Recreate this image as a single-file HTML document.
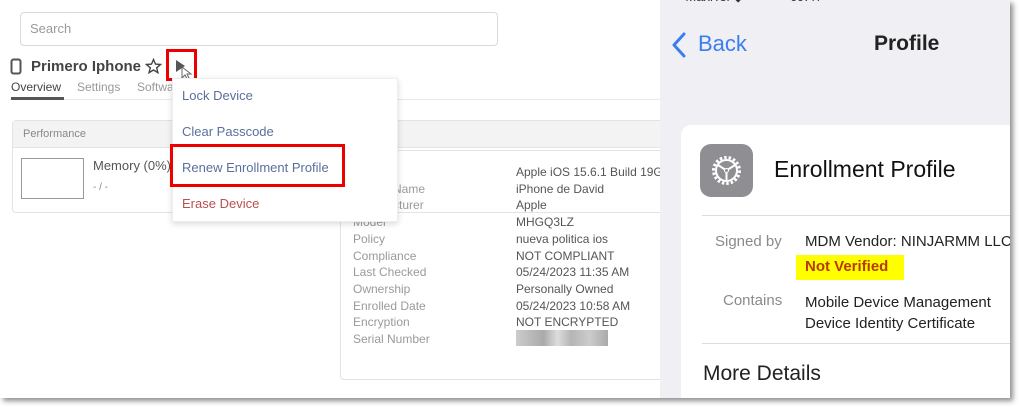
<!DOCTYPE html>
<html><head><style>
*{margin:0;padding:0;box-sizing:border-box}
body{width:1019px;height:407px;background:#fff;font-family:"Liberation Sans",sans-serif;position:relative;overflow:hidden}
.a{position:absolute;white-space:nowrap}
#frame{position:absolute;left:0;top:0;width:1010px;height:398px;overflow:hidden;box-shadow:3px 3px 5px rgba(0,0,0,.45);background:#fff}
.lbl{color:#9a9a9a;font-size:12px}
.val{color:#555;font-size:12px}
.mi{font-size:13px;color:#5b6f9c}
</style></head><body>
<div id="frame">
<div class="a" style="left:20px;top:12px;width:478px;height:34px;border:1px solid #d9d9d9;border-radius:4px"></div>
<div class="a" style="left:30px;top:21px;font-size:13px;color:#999">Search</div>
<svg class="a" style="left:10px;top:58px" width="12" height="17"><rect x="1.5" y="1.5" width="9" height="14" rx="2" fill="none" stroke="#555" stroke-width="2"/></svg>
<div class="a" style="left:31px;top:58px;font-size:15px;font-weight:bold;color:#444">Primero Iphone</div>
<svg class="a" style="left:145px;top:58px" width="17" height="16"><path d="M8.5 1.5l2 4.6 5 .4-3.8 3.3 1.2 4.9-4.4-2.7-4.4 2.7 1.2-4.9L1.5 6.5l5-.4z" fill="none" stroke="#444" stroke-width="1.4"/></svg>
<div class="a" style="left:166px;top:49px;width:31px;height:32px;border:3px solid #e00"></div>
<svg class="a" style="left:175px;top:58px" width="20" height="22"><path d="M1 2l9 6-9 6z" fill="#555"/><path d="M7 9l0 11 3-3 2 4 2-1-2-4 4 0z" fill="#fff" stroke="#666" stroke-width="1"/></svg>
<div class="a" style="left:11px;top:80px;font-size:12px;color:#444">Overview</div>
<div class="a" style="left:77px;top:80px;font-size:12px;color:#999">Settings</div>
<div class="a" style="left:137px;top:80px;font-size:12px;color:#999">Software</div>
<div class="a" style="left:10px;top:99px;width:650px;height:1px;background:#e8e8e8"></div>
<div class="a" style="left:11px;top:97px;width:53px;height:3px;background:#555"></div>
<div class="a" style="left:12px;top:120px;width:660px;height:93px;border:1px solid #e3e3e3;border-radius:4px"></div>
<div class="a" style="left:13px;top:121px;width:660px;height:27px;background:#f3f3f3;border-bottom:1px solid #e3e3e3"></div>
<div class="a" style="left:23px;top:128px;font-size:11px;color:#888">Performance</div>
<div class="a" style="left:21px;top:158px;width:63px;height:41px;border:1px solid #999"></div>
<div class="a" style="left:93px;top:158px;font-size:13px;color:#555">Memory (0%)</div>
<div class="a" style="left:93px;top:182px;font-size:10px;color:#888">- / -</div>
<div class="a" style="left:340px;top:150px;width:330px;height:230px;border:1px solid #e3e3e3;border-radius:4px"></div>
<div class="a lbl" style="left:353px;top:164px;line-height:16.7px">OS<br>Device Name<br>Manufacturer<br>Model<br>Policy<br>Compliance<br>Last Checked<br>Ownership<br>Enrolled Date<br>Encryption<br>Serial Number</div>
<div class="a val" style="left:516px;top:164px;line-height:16.7px">Apple iOS 15.6.1 Build 19G82<br>iPhone de David<br>Apple<br>MHGQ3LZ<br>nueva politica ios<br>NOT COMPLIANT<br>05/24/2023 11:35 AM<br>Personally Owned<br>05/24/2023 10:58 AM<br>NOT ENCRYPTED</div>
<div class="a" style="left:516px;top:330px;width:92px;height:16px;background:linear-gradient(90deg,#ccc,#aaa 30%,#ddd 45%,#b5b5b5 60%,#ccc 80%,#aaa)"></div>
<div class="a" style="left:172px;top:78px;width:226px;height:144px;background:#fff;border:1px solid #eee;box-shadow:0 2px 6px rgba(0,0,0,.15)"></div>
<div class="a mi" style="left:182px;top:88px">Lock Device</div>
<div class="a mi" style="left:182px;top:124px">Clear Passcode</div>
<div class="a mi" style="left:182px;top:160px">Renew Enrollment Profile</div>
<div class="a mi" style="left:182px;top:196px;color:#b85050">Erase Device</div>
<div class="a" style="left:170px;top:144px;width:175px;height:43px;border:3px solid #e00"></div>
<!-- right -->
<div class="a" style="left:660px;top:0;width:350px;height:398px;background:#efeff4"></div>
<div class="a" style="left:668px;top:-11px;font-size:13px;color:#333">▪▪▪ MaxiTel ◆ &nbsp; &nbsp; &nbsp; &nbsp; &nbsp; &nbsp; 09:47</div>
<svg class="a" style="left:671px;top:32px" width="16" height="26"><path d="M13 2L3 13l10 11" fill="none" stroke="#3a7ef0" stroke-width="3" stroke-linecap="round" stroke-linejoin="round"/></svg>
<div class="a" style="left:698px;top:31px;font-size:22px;color:#3a7ef0">Back</div>
<div class="a" style="left:874px;top:32px;font-size:21px;font-weight:bold;color:#222">Profile</div>
<div class="a" style="left:681px;top:125px;width:345px;height:290px;background:#fff;border-radius:10px"></div>
<div class="a" style="left:700px;top:144px;width:53px;height:53px;background:#8e8e93;border-radius:11px"></div>
<svg class="a" style="left:700px;top:144px" width="53" height="53"><g fill="none" stroke="#fff" stroke-width="3"><circle cx="26.5" cy="26.5" r="13" stroke-dasharray="2.5 2"/><circle cx="26.5" cy="26.5" r="10.5" stroke-width="2"/></g><g stroke="#fff" stroke-width="2"><path d="M26.5 26.5L18 21M26.5 26.5L35 21M26.5 26.5V36.5"/></g><circle cx="26.5" cy="26.5" r="2" fill="#8e8e93" stroke="#fff"/></svg>
<div class="a" style="left:774px;top:156px;font-size:23px;font-weight:500;color:#111">Enrollment Profile</div>
<div class="a" style="left:702px;top:215px;width:320px;height:1px;background:#ddd"></div>
<div class="a" style="left:715px;top:233px;font-size:15px;color:#8a8a8e">Signed by</div>
<div class="a" style="left:805px;top:233px;font-size:15px;color:#222">MDM Vendor: NINJARMM LLC</div>
<div class="a" style="left:796px;top:255px;width:108px;height:25px;background:#ffff00"></div>
<div class="a" style="left:805px;top:258px;font-size:15px;font-weight:bold;color:#b83a00">Not Verified</div>
<div class="a" style="left:723px;top:292px;font-size:15px;color:#8a8a8e">Contains</div>
<div class="a" style="left:805px;top:292px;font-size:15px;color:#222;line-height:21px">Mobile Device Management<br>Device Identity Certificate</div>
<div class="a" style="left:702px;top:343px;width:320px;height:1px;background:#ddd"></div>
<div class="a" style="left:703px;top:362px;font-size:21px;color:#222">More Details</div>
</div>
</body></html>
